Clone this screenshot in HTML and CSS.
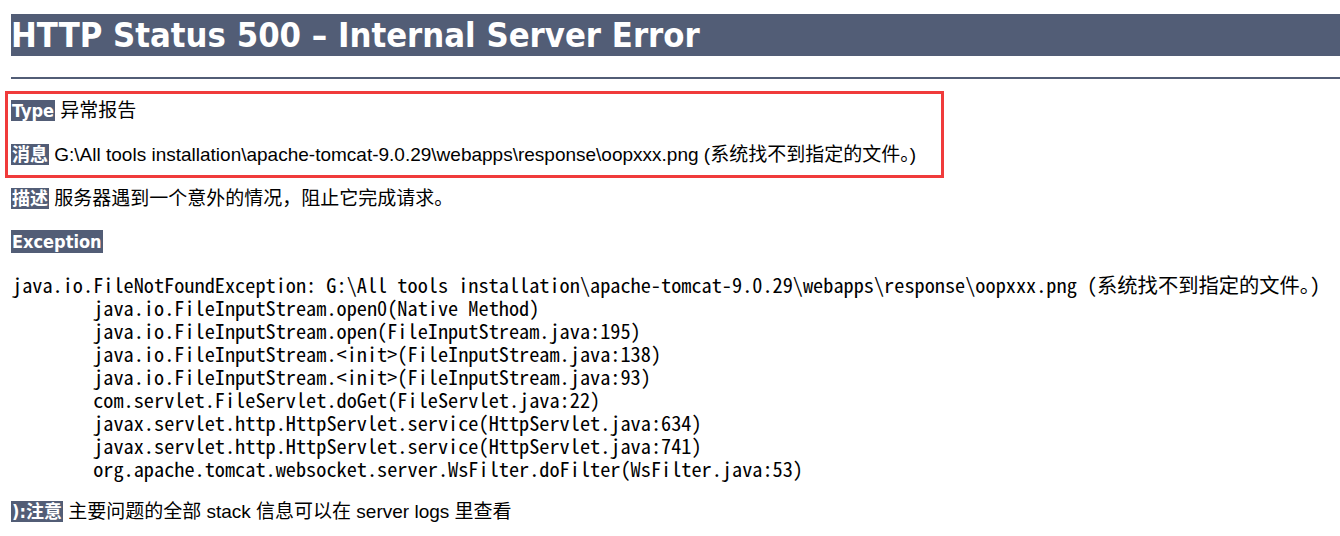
FILE: index.html
```html
<!DOCTYPE html>
<html lang="zh-CN">
<head>
<meta charset="utf-8">
<title>HTTP Status 500 – Internal Server Error</title>
<link rel="stylesheet" href="styles.css">
</head>
<body>
<h1 class="title">HTTP Status 500 – Internal Server Error</h1>
<hr class="line">
<div class="annot">
  <p class="row row-type"><b class="label">Type</b> 异常报告</p>
  <p class="row row-msg"><b class="label">消息</b> G:\All tools installation\apache-tomcat-9.0.29\webapps\response\oopxxx.png (系统找不到指定的文件。)</p>
</div>
<p class="row row-desc"><b class="label">描述</b> 服务器遇到一个意外的情况，阻止它完成请求。</p>
<p class="row row-exc"><b class="label label-exc">Exception</b></p>
<pre class="trace">java.io.FileNotFoundException: G:\All tools installation\apache-tomcat-9.0.29\webapps\response\oopxxx.png (系统找不到指定的文件。)
	java.io.FileInputStream.open0(Native Method)
	java.io.FileInputStream.open(FileInputStream.java:195)
	java.io.FileInputStream.&lt;init&gt;(FileInputStream.java:138)
	java.io.FileInputStream.&lt;init&gt;(FileInputStream.java:93)
	com.servlet.FileServlet.doGet(FileServlet.java:22)
	javax.servlet.http.HttpServlet.service(HttpServlet.java:634)
	javax.servlet.http.HttpServlet.service(HttpServlet.java:741)
	org.apache.tomcat.websocket.server.WsFilter.doFilter(WsFilter.java:53)
</pre>
<p class="row row-note"><b class="label">):注意</b> 主要问题的全部 stack 信息可以在 server logs 里查看</p>
</body>
</html>
```
FILE: styles.css
```css
html, body {
  background: #ffffff;
}
body {
  margin: 0;
  padding: 14px 0 0 11px;
  font-family: "Liberation Sans", "Noto Sans CJK SC", sans-serif;
  font-size: 19px;
  color: #000000;
  overflow: hidden;
}
.title {
  margin: 0;
  height: 42px;
  line-height: 42px;
  background: #525D76;
  color: #ffffff;
  font-family: "DejaVu Sans Condensed", "DejaVu Sans", sans-serif;
  font-weight: bold;
  font-size: 34.3px;
  white-space: nowrap;
  overflow: hidden;
}
.line {
  margin: 21px 0 0;
  height: 2px;
  border: none;
  background: #525D76;
}
.annot {
  box-sizing: border-box;
  width: 939px;
  margin: 12px 0 0 -6px;
  padding: 5px 0 8px 3px;
  border: 3px solid #f03b3b;
}
.row {
  margin: 0;
  height: 24px;
  line-height: 24px;
  white-space: nowrap;
}
.row-msg {
  margin-top: 20px;
}
.row-desc {
  margin-top: 9px;
}
.row-exc {
  margin-top: 19px;
  height: 23px;
  line-height: 23px;
}
.row-note {
  margin-top: 20px;
}
.label {
  display: inline-block;
  vertical-align: top;
  margin-top: 1px;
  height: 21px;
  line-height: 21px;
  padding: 0 1px;
  background: #525D76;
  color: #ffffff;
  font-family: "DejaVu Sans Condensed", "Noto Sans CJK SC", sans-serif;
  font-weight: bold;
  font-size: 18px;
}
.label-exc {
  margin-top: 0;
  height: 23px;
  line-height: 23px;
}
.trace {
  margin: 20px 0 0;
  padding-left: 1px;
  font-family: "Noto Sans Mono CJK SC", "Liberation Mono", monospace;
  font-weight: 300;
  font-size: 20.3px;
  line-height: 23px;
  tab-size: 8;
  white-space: pre;
  color: #000000;
}
```
